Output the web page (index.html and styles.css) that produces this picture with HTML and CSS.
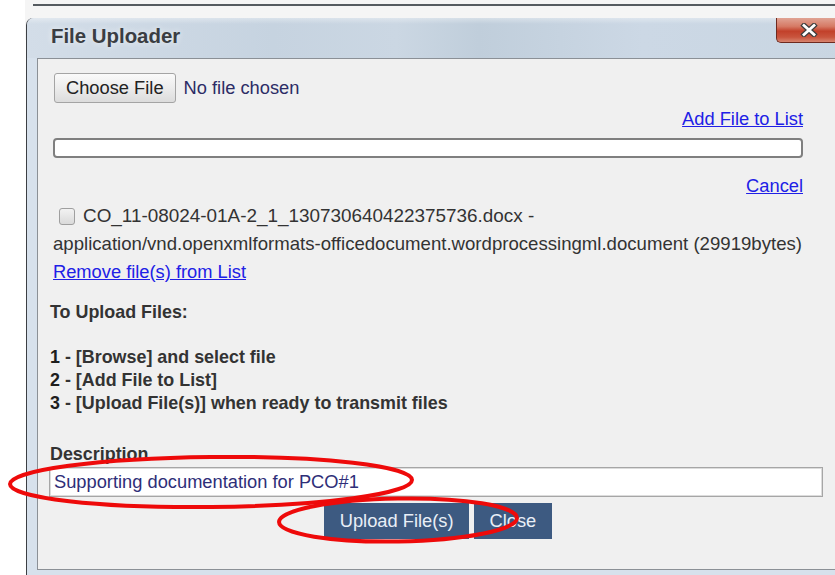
FILE: index.html
```html
<!DOCTYPE html>
<html lang="en">
<head>
<meta charset="utf-8">
<title>File Uploader</title>
<link rel="stylesheet" href="styles.css">
</head>
<body>
<div class="screen">
  <div class="backdrop"><div class="backdrop-window"></div></div>

  <section class="dialog">
    <header class="titlebar">
      <h1 class="title">File Uploader</h1>
      <button class="win-close" type="button" aria-label="Close">
        <svg width="18" height="14" viewBox="0 0 18 14">
          <path d="M4 2.5 L14 11.5 M14 2.5 L4 11.5" stroke="#3d3d3d" stroke-width="5.2" stroke-linecap="square" fill="none"/>
          <path d="M4 2.5 L14 11.5 M14 2.5 L4 11.5" stroke="#ffffff" stroke-width="2.8" stroke-linecap="square" fill="none"/>
        </svg>
      </button>
    </header>

    <div class="panel">
      <div class="col">
        <div class="file-pick">
          <span class="choose-btn">Choose File</span>
          <span class="no-file">No file chosen</span>
        </div>
        <div class="link-row"><a href="#">Add File to List</a></div>
        <div class="progress"></div>
        <div class="link-row cancel-row"><a href="#">Cancel</a></div>
        <div class="file-list">
          <div class="file-item"><span class="check"></span><span class="file-name">CO_11-08024-01A-2_1_130730640422375736.docx -</span></div>
          <div class="file-type">application/vnd.openxmlformats-officedocument.wordprocessingml.document (29919bytes)</div>
          <div><a href="#">Remove file(s) from List</a></div>
        </div>
      </div>

      <div class="instructions">
        <p class="heading">To Upload Files:</p>
        <ol class="steps">
          <li><span class="num">1</span> - [Browse] and select file</li>
          <li><span class="num">2</span> - [Add File to List]</li>
          <li><span class="num">3</span> - [Upload File(s)] when ready to transmit files</li>
        </ol>
        <p class="desc-label">Description</p>
        <div class="desc-input">Supporting documentation for PCO#1</div>
        <div class="actions">
          <button class="action upload" type="button">Upload File(s)</button>
          <button class="action" type="button">Close</button>
        </div>
      </div>
    </div>
  </section>

  <svg class="marks" width="835" height="575" viewBox="0 0 835 575">
    <ellipse cx="211" cy="482" rx="201" ry="25" transform="rotate(-0.6 211 482)" fill="none" stroke="#ee0a0a" stroke-width="4"/>
    <ellipse cx="398" cy="520" rx="119" ry="21.5" transform="rotate(-1 398 520)" fill="none" stroke="#ee0a0a" stroke-width="4"/>
  </svg>
</div>
</body>
</html>
```

FILE: styles.css
```css
* { box-sizing: border-box; }

html, body {
  margin: 0;
  padding: 0;
  background: #ffffff;
}

.screen {
  position: relative;
  width: 835px;
  height: 575px;
  overflow: hidden;
  background: #ffffff;
  font-family: "Liberation Sans", Arial, sans-serif;
}

/* window lying behind the dialog */
.backdrop {
  position: absolute;
  left: 25px;
  top: 0;
  right: 0;
  height: 40px;
  background: #f5f5f5;
}
.backdrop-window {
  margin: 4px 0 0 8px;
  border-top: 2px solid #555b60;
}

/* dialog window */
.dialog {
  position: absolute;
  left: 26px;
  top: 18px;
  width: 822px;
  height: 570px;
  background: #d7e1ec;
  border-left: 1px solid #3c3f44;
  border-top-left-radius: 7px;
  display: flex;
  flex-direction: column;
}

.titlebar {
  height: 40px;
  flex: none;
  display: flex;
  align-items: flex-start;
  padding-left: 24px;
  border-top-left-radius: 7px;
  background:
    linear-gradient(180deg, rgba(255,255,255,0.35) 0, rgba(255,255,255,0) 6px),
    linear-gradient(90deg, #d3dde8 0, #c6d3e0 30%, #cbd7e3 45%, #c0cedb 55%, #ccd8e5 75%, #c9d6e2 100%);
}

.title {
  margin: 6px 0 0 0;
  font-size: 20.4px;
  line-height: 24px;
  font-weight: bold;
  color: #3a3d42;
  text-shadow: 0 0 6px rgba(255,255,255,0.7);
}

.win-close {
  margin-left: auto;
  width: 72px;
  height: 25px;
  border: 1px solid #6e2a1f;
  border-top: none;
  border-right: none;
  border-bottom-left-radius: 5px;
  background: linear-gradient(180deg, #e0a394 0, #d67a65 35%, #c2402a 55%, #c9553e 80%, #d8856f 100%);
  display: flex;
  align-items: center;
  justify-content: flex-start;
  padding: 0 0 0 23px;
}
.win-close svg { display: block; }

.panel {
  margin-left: 10px;
  height: 512px;
  flex: none;
  background: #f0f0f0;
  border-left: 1px solid #8b9096;
  border-top: 1px solid #8b9096;
  border-bottom: 1px solid #8b9096;
  font-size: 18.3px;
  color: #2f2f2f;
}

.col {
  margin-left: 15px;
  width: 750px;
  padding-top: 14px;
}

.file-pick {
  display: flex;
  align-items: center;
  height: 30px;
}
.choose-btn {
  margin-left: 1px;
  height: 30px;
  padding: 0 11px;
  display: flex;
  align-items: center;
  border: 1px solid #a4a4a4;
  border-radius: 3px;
  background: linear-gradient(180deg, #fafafa 0, #ececec 50%, #dcdcdc 100%);
  color: #222222;
}
.no-file {
  margin-left: 8px;
  color: #2c2c66;
}

a {
  color: #2020e6;
  text-decoration: underline;
}

.link-row {
  margin-top: 6px;
  line-height: 20px;
  text-align: right;
}
.cancel-row { margin-top: 18px; }

.progress {
  margin-top: 9px;
  height: 20px;
  background: #ffffff;
  border: 2px solid #7f7f7f;
  border-radius: 4px;
}

.file-list {
  margin-top: 6px;
  line-height: 28px;
  white-space: nowrap;
  color: #333333;
}
.file-item {
  display: flex;
  align-items: center;
}
.file-name { font-size: 18.9px; }
.file-type { font-size: 18.6px; }
.check {
  width: 16px;
  height: 17px;
  margin: 0 8px 0 6px;
  border: 1px solid #9f9f9f;
  border-radius: 3px;
  background: linear-gradient(180deg, #f2f2f2 0, #dadada 100%);
}

.instructions {
  margin-left: 12px;
  font-size: 17.9px;
  font-weight: bold;
  color: #333333;
}
.heading {
  margin: 16px 0 0 0;
  line-height: 20px;
}
.steps {
  list-style: none;
  margin: 24px 0 0 0;
  padding: 0;
  line-height: 23px;
}
.num { color: #1e1e1e; }

.desc-label {
  margin: 29px 0 0 0;
  line-height: 20px;
}

.desc-input {
  margin: 3px 0 0 -1px;
  width: 774px;
  height: 30px;
  padding-left: 4px;
  display: flex;
  align-items: center;
  background: #ffffff;
  border: 1px solid #a6a6a6;
  box-shadow: inset 0 0 0 1px #dcdcdc;
  font-size: 18.3px;
  font-weight: normal;
  color: #2e2e78;
}

.actions {
  margin: 6px 0 0 -1px;
  width: 774px;
  padding-left: 4px;
  display: flex;
  justify-content: center;
  gap: 5px;
}
.action {
  height: 36px;
  padding: 0 15.5px;
  border: none;
  background: #3d5a81;
  color: #e9eff7;
  font-family: "Liberation Sans", Arial, sans-serif;
  font-size: 18.3px;
  font-weight: normal;
}

/* red annotation rings drawn on top */
.marks {
  position: absolute;
  left: 0;
  top: 0;
  pointer-events: none;
}
```
